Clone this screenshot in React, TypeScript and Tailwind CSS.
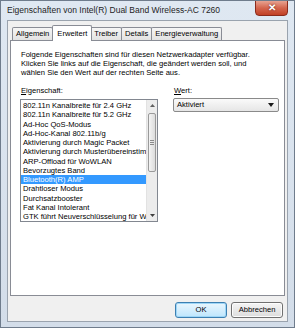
import { useState } from "react";

const items = [
  "802.11n Kanalbreite für 2.4 GHz",
  "802.11n Kanalbreite für 5.2 GHz",
  "Ad-Hoc QoS-Modus",
  "Ad-Hoc-Kanal 802.11b/g",
  "Aktivierung durch Magic Packet",
  "Aktivierung durch Musterübereinstim",
  "ARP-Offload für WoWLAN",
  "Bevorzugtes Band",
  "Bluetooth(R) AMP",
  "Drahtloser Modus",
  "Durchsatzbooster",
  "Fat Kanal Intolerant",
  "GTK führt Neuverschlüsselung für W",
];

const tabs = ["Allgemein", "Erweitert", "Treiber", "Details", "Energieverwaltung"];

export default function App() {
  const [selected, setSelected] = useState(8);
  const [tab, setTab] = useState(1);

  return (
    <div
      className="relative w-[295px] h-[328px] overflow-hidden border border-[#6f7c8c] bg-linear-to-b from-[#dfe8f2] to-[#d3dde9] text-black"
      style={{ fontFamily: '"Liberation Sans", Arial, sans-serif' }}
    >
      {/* Title bar */}
      <div className="h-[19px] flex items-center pl-[6px] text-[8.5px] text-[#1e1e1e]">
        Eigenschaften von Intel(R) Dual Band Wireless-AC 7260
      </div>

      {/* Close button */}
      <div className="absolute top-[-1px] right-[6px] w-[33px] h-[16px] rounded-b-[4px] border border-[#8a2b1c] bg-linear-to-b from-[#e7a291] via-[#d4654d] to-[#c13f24] flex items-center justify-center">
        <span className="text-white text-[10px] font-bold leading-none [text-shadow:0_0_2px_#5a1a10]">✕</span>
      </div>

      {/* Client area */}
      <div className="mx-[6px] h-[302px] border border-[#9aa3ae] bg-[#f0f0f0] flex flex-col px-[2px] pt-[4px]">
        {/* Tabs */}
        <div className="flex items-end pl-[2px] h-[15px] relative z-10 text-[7.6px]">
          {tabs.map((t, i) =>
            i === tab ? (
              <button
                key={t}
                onClick={() => setTab(i)}
                className="h-[16px] -mb-px px-[4px] -mx-px border border-b-0 border-[#898c95] bg-white rounded-t-[2px] leading-none relative z-10"
              >
                {t}
              </button>
            ) : (
              <button
                key={t}
                onClick={() => setTab(i)}
                className="h-[13px] px-[3px] border border-b-0 border-[#898c95] bg-linear-to-b from-[#f6f6f6] to-[#e2e2e2] rounded-t-[2px] leading-none -ml-px first:ml-0"
              >
                {t}
              </button>
            )
          )}
        </div>

        {/* Panel */}
        <div className="h-[256px] border border-[#898c95] bg-white pl-[9px] pr-[5px] pt-[9px] text-[7.6px]">
          <p className="leading-[9px] pl-[1px] whitespace-nowrap">
            Folgende Eigenschaften sind für diesen Netzwerkadapter verfügbar.
            <br />
            Klicken Sie links auf die Eigenschaft, die geändert werden soll, und
            <br />
            wählen Sie den Wert auf der rechten Seite aus.
          </p>

          <div className="flex gap-[15px] mt-[9px]">
            {/* Property list */}
            <div className="flex flex-col">
              <div className="leading-[9px] pl-[1px] h-[13px]">
                <span className="underline">E</span>igenschaft:
              </div>
              <div className="w-[138px] h-[123px] border border-[#828790] bg-white flex">
                <div className="flex-1 min-w-0 overflow-hidden pt-[1px]">
                  {items.map((it, i) => (
                    <div
                      key={it}
                      onClick={() => setSelected(i)}
                      className={
                        "h-[9.25px] leading-[9.25px] pl-[2px] whitespace-nowrap " +
                        (i === selected ? "bg-[#3399ff] text-white" : "")
                      }
                    >
                      {it}
                    </div>
                  ))}
                </div>
                {/* Scrollbar */}
                <div className="w-[11px] bg-[#ececec] border-l border-[#e2e2e2] flex flex-col">
                  <div className="h-[11px] flex items-center justify-center">
                    <svg width="5" height="3" viewBox="0 0 5 3">
                      <path d="M0 3 L2.5 0 L5 3 Z" fill="#606060" />
                    </svg>
                  </div>
                  <div className="mt-[2px] h-[59px] mx-[1px] rounded-[2px] border border-[#9a9a9a] bg-linear-to-r from-[#f4f4f4] to-[#dcdcdc] flex flex-col items-center justify-center gap-[1px]">
                    <div className="w-[4px] h-px bg-[#8a8a8a]" />
                    <div className="w-[4px] h-px bg-[#8a8a8a]" />
                    <div className="w-[4px] h-px bg-[#8a8a8a]" />
                  </div>
                  <div className="flex-1" />
                  <div className="h-[11px] flex items-center justify-center">
                    <svg width="5" height="3" viewBox="0 0 5 3">
                      <path d="M0 0 L2.5 3 L5 0 Z" fill="#404040" />
                    </svg>
                  </div>
                </div>
              </div>
            </div>

            {/* Value */}
            <div className="flex flex-col">
              <div className="leading-[9px] pl-[1px] h-[12px]">
                <span className="underline">W</span>ert:
              </div>
              <div className="w-[106px] h-[14px] border border-[#8a8a8a] rounded-[2px] bg-linear-to-b from-[#fafafa] to-[#e6e6e6] flex items-center pl-[3px] pr-[4px]">
                <span className="flex-1">Aktiviert</span>
                <svg width="6" height="4" viewBox="0 0 6 4">
                  <path d="M0 0 L6 0 L3 4 Z" fill="#1a1a1a" />
                </svg>
              </div>
            </div>
          </div>
        </div>

        {/* Buttons */}
        <div className="flex justify-end gap-[4px] mt-[6px] pr-[2px] text-[7.6px]">
          <button className="w-[52px] h-[16px] rounded-[3px] border border-[#3c7fb1] bg-linear-to-b from-[#eaf6fd] to-[#bee6fd] shadow-[inset_0_0_0_1px_#9ed6f7]">
            OK
          </button>
          <button className="w-[52px] h-[16px] rounded-[3px] border border-[#707070] bg-linear-to-b from-[#f4f4f4] to-[#dddddd] shadow-[inset_0_0_0_1px_#fcfcfc]">
            Abbrechen
          </button>
        </div>
      </div>
    </div>
  );
}
